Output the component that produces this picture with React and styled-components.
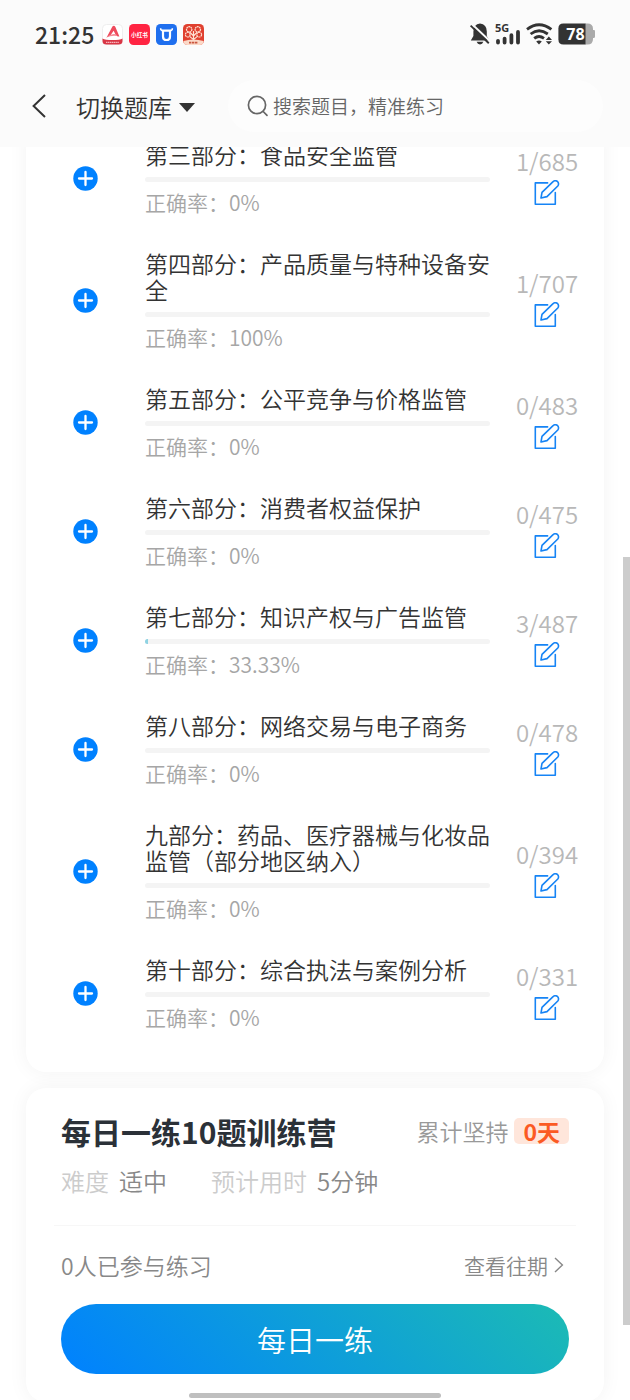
import React from 'react';
import styled, { createGlobalStyle } from 'styled-components';

const parts = [
   { title: '第三部分：食品安全监管', done: 1, total: 685, rate: '0%', progress: 0 },
   { title: '第四部分：产品质量与特种设备安全', done: 1, total: 707, rate: '100%', progress: 0 },
   { title: '第五部分：公平竞争与价格监管', done: 0, total: 483, rate: '0%', progress: 0 },
   { title: '第六部分：消费者权益保护', done: 0, total: 475, rate: '0%', progress: 0 },
   { title: '第七部分：知识产权与广告监管', done: 3, total: 487, rate: '33.33%', progress: 1 },
   { title: '第八部分：网络交易与电子商务', done: 0, total: 478, rate: '0%', progress: 0 },
   { title: '九部分：药品、医疗器械与化妆品监管（部分地区纳入）', done: 0, total: 394, rate: '0%', progress: 0 },
   { title: '第十部分：综合执法与案例分析', done: 0, total: 331, rate: '0%', progress: 0 },
];

//ICONS
const PlusIcon = () => (
   <svg width="25" height="25" viewBox="0 0 25 25" aria-hidden="true">
      <circle cx="12.5" cy="12.5" r="12.2" fill="#0081ff" />
      <path d="M12.5 6v13M6 12.5h13" stroke="#fff" strokeWidth="2.3" strokeLinecap="round" />
   </svg>
);

const EditIcon = () => (
   <svg width="26" height="26" viewBox="0 0 26 26" fill="none" stroke="#1684f5" strokeWidth="1.6" strokeLinejoin="round" aria-hidden="true">
      <path d="M13.6 2.9H1.3V24.3H21.3V12.6" strokeLinecap="round" />
      <path d="M7 18L8 12.4L18.8 1.9A3 3 0 0 1 23.8 6L13 16.6Z" />
   </svg>
);

const BackIcon = () => (
   <svg width="14" height="24" viewBox="0 0 14 24" fill="none" stroke="#333" strokeWidth="2" aria-hidden="true">
      <path d="M13 1L1.6 12L13 23" />
   </svg>
);

const SearchIcon = () => (
   <svg width="22" height="22" viewBox="0 0 22 22" fill="none" stroke="#666" strokeWidth="1.7" strokeLinecap="round" aria-hidden="true">
      <circle cx="10" cy="10" r="8.6" />
      <path d="M16.2 16.5L20 20.4" />
   </svg>
);

const ArrowIcon = () => (
   <svg width="10" height="16" viewBox="0 0 10 16" fill="none" stroke="#888" strokeWidth="1.4" aria-hidden="true">
      <path d="M1 1L8.4 8L1 15" />
   </svg>
);

const AppIcons = () => (
   <>
      <svg width="21" height="21" viewBox="0 0 21 21" aria-hidden="true">
         <rect x=".5" y=".5" width="20" height="20" rx="4" fill="#fff" stroke="#eee" />
         <path d="M4.6 13.4L10.4 2.6Q12 .8 13.4 3L17.4 12.6Q15 12.8 13.8 11L11.6 6.8L8.4 11.6Z" fill="#ee4a5c" />
         <path d="M4 13.6Q9 8.8 14 10.2L15 12Q10 11 4 13.6Z" fill="#f58a95" />
         <path d="M.5 14.4Q3 16 10.5 16T20.5 14.4V17Q20.5 20.5 16.5 20.5H4.5Q.5 20.5 .5 17Z" fill="#d93645" />
         <path d="M4 18.4H17" stroke="#f6b6bc" strokeWidth="1.4" strokeDasharray="1.4 .5" />
      </svg>
      <svg width="21" height="21" viewBox="0 0 21 21" aria-hidden="true">
         <rect width="21" height="21" rx="4.5" fill="#ff2442" />
         <text x="10.5" y="12.8" fontSize="5.6" fontWeight="700" fill="#fff" textAnchor="middle">小红书</text>
      </svg>
      <svg width="21" height="21" viewBox="0 0 21 21" aria-hidden="true">
         <rect width="21" height="21" rx="4.5" fill="#1f6fee" />
         <path d="M7 6.6V12.4Q7 16 10.5 16T14 12.4V6.6Z" fill="none" stroke="#fff" strokeWidth="2.2" strokeLinejoin="round" />
         <path d="M4.6 4.2Q4.6 6.6 7 6.6M16.4 4.2Q16.4 6.6 14 6.6" fill="none" stroke="#fff" strokeWidth="1.5" />
      </svg>
      <svg width="21" height="21" viewBox="0 0 21 21" aria-hidden="true">
         <rect width="21" height="21" rx="4.5" fill="#e0402f" />
         <g fill="none" stroke="#ffe3d6" strokeWidth="1.2">
            <circle cx="6.2" cy="5.4" r="2.7" strokeDasharray="1.8 .5" />
            <circle cx="14.8" cy="5.4" r="2.7" strokeDasharray="1.8 .5" />
            <circle cx="4.8" cy="10.6" r="2.4" strokeDasharray="1.8 .5" />
            <circle cx="16.2" cy="10.6" r="2.4" strokeDasharray="1.8 .5" />
            <path d="M10.5 16V7M10.5 12L7 8.4M10.5 12L14 8.4M10.5 15.6L6.6 12.4M10.5 15.6L14.4 12.4" />
         </g>
         <path d="M.4 17Q10.5 14 20.6 17Q20.6 21 16.5 21H4.5Q.4 21 .4 17Z" fill="#fbd9c8" />
         <path d="M6 18.6H15" stroke="#c9563f" strokeWidth="1.8" strokeDasharray="2.4 .6" />
      </svg>
   </>
);

const StatusIcons = () => (
   <>
      <svg width="20" height="22" viewBox="0 0 20 22" aria-hidden="true">
         <path d="M10 .6Q16.8 1.6 16.8 8.4V13L19.4 17.4H.8L3.4 13V8.4Q3.4 1.6 10 .6Z" fill="#333" />
         <path d="M6.6 18.8H13.4Q12.4 21.4 10 21.4T6.6 18.8Z" fill="#333" />
         <path d="M1.8 1L20.4 18.6" stroke="#fbfbfb" strokeWidth="2" />
         <path d="M.6 2.6L18.8 20.2" stroke="#333" strokeWidth="1.9" />
      </svg>
      <svg width="26" height="22" viewBox="0 0 26 22" overflow="visible" aria-hidden="true">
         <text x="0" y="9" fontFamily="Noto Sans, sans-serif" fontSize="11" fontWeight="700" fill="#333">5G</text>
         <path d="M3 17.8V19.6M9.6 15.6V19.6M16.4 12.2V19.6M23 9V19.6" stroke="#333" strokeWidth="3.8" strokeLinecap="round" />
      </svg>
      <svg width="27" height="22" viewBox="0 0 27 22" fill="none" stroke="#333" strokeWidth="2.8" aria-hidden="true">
         <path d="M1 6.4Q13 -2.8 25.4 6.4" />
         <path d="M4.6 11Q13 4.6 21.8 11" />
         <path d="M8.2 15.4Q13 11.6 18 15.4" />
         <path d="M10.2 18.4Q13 16.4 15.8 18.4L13 21.4Z" fill="#333" stroke="none" />
         <path d="M22.8 13.4L26 17H19.8ZM22.8 21.6L26 18.2H19.8Z" fill="#333" stroke="none" />
      </svg>
      <svg width="38" height="22" viewBox="0 0 38 22" aria-label="电量78">
         <path d="M27 .5H29.5Q35 .5 35 6V7H36Q37 7 37 8.4V13.6Q37 15 36 15H35V16Q35 21.5 29.5 21.5H27Z" fill="#aaa" />
         <path d="M27.5 .5H5.4Q.4 .5 .4 5.5V16.5Q.4 21.5 5.4 21.5H27.5Z" fill="#333" />
         <text x="17.5" y="17" fontFamily="Noto Sans, sans-serif" fontSize="16" fontWeight="700" fill="#fff" textAnchor="middle">78</text>
      </svg>
   </>
);

const PartRow = ({ part }) => (
   <Row>
      <IconButton aria-label={`展开 ${part.title}`}>
         <PlusIcon />
      </IconButton>
      <div>
         <PartTitle>{part.title}</PartTitle>
         <Track>
            <Fill style={{ width: `${part.progress}%` }} />
         </Track>
         <Rate>正确率：{part.rate}</Rate>
      </div>
      <Side>
         <Count>
            {part.done}/{part.total}
         </Count>
         <IconButton aria-label={`练习 ${part.title}`}>
            <EditIcon />
         </IconButton>
      </Side>
   </Row>
);

const App = () => {
   return (
      <Page>
         <GlobalStyle />

         <Header>
            <StatusBar>
               <Group $gap={8}>
                  <Clock>21:25</Clock>
                  <Group $gap={6}>
                     <AppIcons />
                  </Group>
               </Group>
               <Group $gap={5}>
                  <StatusIcons />
               </Group>
            </StatusBar>

            <NavBar>
               <IconButton aria-label="返回">
                  <BackIcon />
               </IconButton>
               <BankButton>
                  切换题库
                  <Caret />
               </BankButton>
               <SearchBox>
                  <SearchIcon />
                  <SearchInput type="text" placeholder="搜索题目，精准练习" />
               </SearchBox>
            </NavBar>
         </Header>

         <Main>
            <ListCard>
               {parts.map((part) => (
                  <PartRow key={part.title} part={part} />
               ))}
            </ListCard>

            <CampCard>
               <Between>
                  <CampTitle>每日一练10题训练营</CampTitle>
                  <Streak>
                     累计坚持
                     <Badge>0天</Badge>
                  </Streak>
               </Between>
               <Meta>
                  <div>
                     <MetaLabel>难度</MetaLabel>适中
                  </div>
                  <div>
                     <MetaLabel>预计用时</MetaLabel>5分钟
                  </div>
               </Meta>
               <Divider />
               <Between>
                  <Joined>0人已参与练习</Joined>
                  <HistoryLink href="#history">
                     查看往期
                     <ArrowIcon />
                  </HistoryLink>
               </Between>
               <StartButton>每日一练</StartButton>
            </CampCard>
         </Main>

         <ScrollThumb />
         <HomeBar />
      </Page>
   );
};

const GlobalStyle = createGlobalStyle`
   * {
      box-sizing: border-box;
   }

   body {
      margin: 0;
      background: #fff;
      color: #333;
      font-family: 'Noto Sans CJK SC', sans-serif;
      font-weight: 350;
   }

   button, input {
      font: inherit;
      color: inherit;
      border: 0;
      padding: 0;
      background: transparent;
   }

   svg {
      display: block;
      flex: none;
   }
`;

const Page = styled.div`
   display: flex;
   flex-direction: column;
   height: 100vh;
   overflow: hidden;
`;

const Header = styled.header`
   position: relative;
   z-index: 1;
   flex: none;
   padding-bottom: 15px;
   background: #fbfbfb;
`;

const StatusBar = styled.div`
   display: flex;
   align-items: center;
   justify-content: space-between;
   height: 68px;
   padding: 0 34px 0 35px;
`;

const Group = styled.div`
   display: flex;
   align-items: center;
   gap: ${(props) => props.$gap}px;
`;

const Clock = styled.span`
   font-size: 23px;
   font-weight: 500;
   line-height: 28px;
`;

const NavBar = styled.nav`
   display: flex;
   align-items: center;
   margin-top: 12px;
   padding: 0 27px 0 32px;
`;

const IconButton = styled.button`
   display: flex;
   align-items: center;
   justify-content: center;
   cursor: pointer;
`;

const BankButton = styled.button`
   display: flex;
   align-items: center;
   gap: 7px;
   margin: 0 33px 0 30px;
   padding-top: 2px;
   font-size: 24px;
   line-height: 32px;
   cursor: pointer;
`;

const Caret = styled.span`
   border: 8px solid transparent;
   border-top: 9px solid #333;
   border-bottom: 0;
`;

const SearchBox = styled.label`
   display: flex;
   flex: 1;
   align-items: center;
   gap: 4px;
   height: 52px;
   padding: 0 19px;
   border-radius: 26px;
   background: #fdfdfd;
`;

const SearchInput = styled.input`
   flex: 1;
   min-width: 0;
   font-size: 19px;
   line-height: 28px;
   outline: none;

   &::placeholder {
      color: #666;
      opacity: 1;
   }
`;

const Main = styled.main`
   display: flex;
   flex: 1;
   flex-direction: column;
   gap: 16px;
   min-height: 0;
   padding: 0 26px;
`;

const Card = styled.section`
   flex: none;
   border-radius: 20px;
   background: #fff;
   box-shadow: 0 0 20px rgba(0, 0, 0, 0.05);
`;

/* the list is scrolled a little way under the header */
const ListCard = styled(Card)`
   margin-top: -23px;
   padding-bottom: 24px;
`;

const Row = styled.div`
   display: grid;
   grid-template-columns: 119px 1fr 114px;
   align-items: center;
   padding: 17px 0 18px;
`;

const PartTitle = styled.div`
   font-size: 23px;
   line-height: 26px;
`;

const Track = styled.div`
   height: 5px;
   margin: 10px 0 7px;
   border-radius: 3px;
   background: #f4f4f4;
   overflow: hidden;
`;

const Fill = styled.div`
   height: 100%;
   background: #8fd3e3;
`;

const Rate = styled.div`
   color: #a6a6a6;
   font-size: 21px;
   line-height: 26px;
`;

const Side = styled.div`
   display: flex;
   flex-direction: column;
   align-items: center;
   gap: 2px;
   padding-bottom: 6px;
`;

const Count = styled.div`
   color: #b8b8b8;
   font-size: 24px;
   line-height: 34px;
`;

const CampCard = styled(Card)`
   padding: 23px 35px 28px;
`;

const Between = styled.div`
   display: flex;
   align-items: center;
   justify-content: space-between;
`;

const CampTitle = styled.h2`
   margin: 0;
   color: #2b3138;
   font-size: 30px;
   font-weight: 700;
   line-height: 40px;
`;

const Streak = styled.div`
   display: flex;
   align-items: center;
   gap: 6px;
   color: #999;
   font-size: 23px;
   line-height: 26px;
`;

const Badge = styled.span`
   padding: 0 9px;
   border-radius: 5px;
   background: #ffe6db;
   color: #fb5a23;
   font-weight: 700;
`;

const Meta = styled.div`
   display: flex;
   gap: 44px;
   margin-top: 13px;
   color: #888;
   font-size: 24px;
   line-height: 34px;
`;

const MetaLabel = styled.span`
   margin-right: 10px;
   color: #ccc;
`;

const Divider = styled.hr`
   height: 1px;
   margin: 27px -7px 22px;
   border: 0;
   background: #f7f7f7;
`;

const Joined = styled.span`
   color: #888;
   font-size: 23px;
   line-height: 34px;
`;

const HistoryLink = styled.a`
   display: flex;
   align-items: center;
   gap: 6px;
   padding-right: 5px;
   color: #888;
   font-size: 21px;
   line-height: 34px;
   text-decoration: none;
`;

const StartButton = styled.button`
   display: block;
   width: 100%;
   height: 70px;
   margin-top: 22px;
   border-radius: 35px;
   background: linear-gradient(45deg, #0081ff, #1cbbb4);
   color: #fff;
   font-size: 29px;
   line-height: 40px;
   cursor: pointer;
`;

const ScrollThumb = styled.div`
   position: fixed;
   top: 557px;
   right: 0;
   width: 7px;
   height: 768px;
   background: #ccc;
`;

const HomeBar = styled.div`
   position: fixed;
   bottom: 2px;
   left: 30%;
   width: 40%;
   height: 5px;
   border-radius: 3px;
   background: #bfbfbf;
`;

export default App;
